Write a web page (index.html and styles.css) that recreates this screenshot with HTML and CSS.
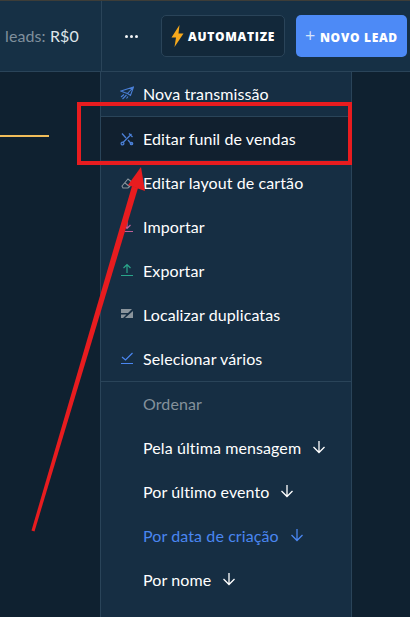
FILE: index.html
```html
<!DOCTYPE html>
<html lang="en">
<head>
  <meta charset="UTF-8">
  <title>Leads</title>
  <link rel="stylesheet" href="styles.css">
</head>
<body>
  <header class="top-bar">
    <div class="summary">leads: <span class="summary-value">R$0</span></div>
    <div class="actions">
      <button type="button" class="more-btn"><span></span><span></span><span></span></button>
      <button type="button" class="auto-btn">
        <svg width="13" height="22" viewBox="0 0 13 22"><path d="M8.5 0 L0.5 12.5 L5 12.5 L3.5 22 L12.5 8.5 L7.5 8.5 Z" fill="#f5a81c"/></svg>
        AUTOMATIZE
      </button>
      <button type="button" class="new-btn"><span class="plus">+</span> NOVO LEAD</button>
    </div>
  </header>

  <main class="board">
    <div class="stage-line"></div>

    <!-- Dropdown menu -->
    <nav class="menu">
      <a class="menu-item first-item">
        <svg class="menu-icon" viewBox="0 0 14 14" fill="none" stroke="#4a7fd6" stroke-width="1.1"><path d="M1 5 L13.5 1 L10.5 9.5 L7.5 7.5 L4.5 6.5 Z M13.5 1 L7.5 7.5 M4 8.5 L1 11 M6.5 9 L2.5 13 M8 10.5 L6.5 12.5"/></svg>
        <span>Nova transmissão</span>
      </a>
      <a class="menu-item is-hover">
        <svg class="menu-icon" viewBox="0 0 14 14" fill="none" stroke="#4a7fd6" stroke-width="1.3"><path d="M2 1.5 L6 6 M8 8 L11.5 12 M11.5 2 L2.5 11 M9 1.5 L12.5 5"/><circle cx="2.5" cy="11.5" r="1.4"/><circle cx="11.5" cy="11.5" r="1.2"/></svg>
        <span>Editar funil de vendas</span>
      </a>
      <a class="menu-item">
        <svg class="menu-icon" viewBox="0 0 14 14" fill="none" stroke="#8a949c" stroke-width="1.1"><path d="M2 11 L8 4 L13 8 L8 13 H3 Z M5 8 L10 12"/></svg>
        <span>Editar layout de cartão</span>
      </a>
      <a class="menu-item">
        <svg class="menu-icon" viewBox="0 0 14 14" fill="none" stroke="#c0609a" stroke-width="1.2"><path d="M7 1 L7 9 M3.5 6 L7 9.5 L10.5 6 M1 12.5 L13 12.5"/></svg>
        <span>Importar</span>
      </a>
      <a class="menu-item">
        <svg class="menu-icon" viewBox="0 0 14 14" fill="none" stroke="#2aa58a" stroke-width="1.2"><path d="M7 10 L7 2 M3.5 5 L7 1.5 L10.5 5 M1 12.5 L13 12.5"/></svg>
        <span>Exportar</span>
      </a>
      <a class="menu-item">
        <svg class="menu-icon" viewBox="0 0 14 14"><path d="M1 2 H12 L8 6 H1 Z M1 7.5 H6.5 L3 11 H1 Z M13 4 V11 H5 Z" fill="#8a949c"/></svg>
        <span>Localizar duplicatas</span>
      </a>
      <a class="menu-item">
        <svg class="menu-icon" viewBox="0 0 14 14" fill="none" stroke="#4a86f0" stroke-width="1.2"><path d="M2 6 L5.5 9 L12.5 2 M1 12.5 L13 12.5"/></svg>
        <span>Selecionar vários</span>
      </a>
      <div class="menu-sep"></div>
      <div class="menu-item menu-title">Ordenar</div>
      <a class="menu-item">Pela última mensagem <svg class="sort-arrow" viewBox="0 0 14 14"><path d="M7 1 V12.5 M1.5 7 L7 12.5 L12.5 7"/></svg></a>
      <a class="menu-item">Por último evento <svg class="sort-arrow" viewBox="0 0 14 14"><path d="M7 1 V12.5 M1.5 7 L7 12.5 L12.5 7"/></svg></a>
      <a class="menu-item is-active">Por data de criação <svg class="sort-arrow" viewBox="0 0 14 14"><path d="M7 1 V12.5 M1.5 7 L7 12.5 L12.5 7"/></svg></a>
      <a class="menu-item">Por nome <svg class="sort-arrow" viewBox="0 0 14 14"><path d="M7 1 V12.5 M1.5 7 L7 12.5 L12.5 7"/></svg></a>
    </nav>
  </main>

  <!-- Annotation drawn over the screenshot -->
  <div class="callout-box"></div>
  <svg class="callout-arrow" width="410" height="617" viewBox="0 0 410 617">
    <path d="M31.5 530.5 L34.5 531.5 L138 188 L132 186 Z" fill="#e81c1f"/>
    <path d="M141 167 L145 191 L128 185 Z" fill="#e81c1f"/>
  </svg>
</body>
</html>
```

FILE: styles.css
```css
html, body {
  height: 100%;
}
body {
  margin: 0;
  overflow: hidden;
  background: #0f2130;
  color: #fff;
  font-family: Lato, Arial, sans-serif;
  font-size: 16px;
  letter-spacing: 0.1px;
  display: flex;
  flex-direction: column;
}
.top-bar {
  height: 72px;
  flex: none;
  box-sizing: border-box;
  background: #163045;
  border-top: 1px solid #3d3d38;
  border-bottom: 1px solid #2a4459;
  display: flex;
  justify-content: space-between;
}
.summary {
  width: 101px;
  box-sizing: border-box;
  padding: 24px 0 0 5px;
  line-height: 22px;
  white-space: nowrap;
  color: #7f8f9c;
}
.summary-value {
  color: #dfe6ea;
}
.actions {
  flex: 1;
  display: flex;
  align-items: flex-start;
  padding-top: 14px;
  border-left: 1px solid #2a4459;
}
button {
  font-family: "Open Sans", Arial, sans-serif;
  font-weight: 800;
  font-size: 12px;
  letter-spacing: 0.7px;
  color: #fff;
  height: 42px;
  border-radius: 5px;
  cursor: pointer;
  white-space: nowrap;
}
.more-btn {
  width: 59px;
  padding: 0;
  background: none;
  border: none;
  display: flex;
  align-items: center;
  justify-content: center;
  gap: 2px;
}
.more-btn span {
  width: 3px;
  height: 3px;
  border-radius: 50%;
  background: #f2f4f6;
}
.auto-btn {
  width: 124px;
  padding: 0;
  margin-right: 11px;
  background: #12283a;
  border: 1px solid #2a4459;
  display: flex;
  align-items: center;
  justify-content: center;
  gap: 4px;
}
.new-btn {
  width: 111px;
  padding: 0;
  background: #4d8af6;
  border: none;
}
.plus {
  font-weight: 400;
  font-size: 18px;
  line-height: 18px;
  color: #d5e3fb;
}
.board {
  flex: 1;
  position: relative;
}
.stage-line {
  position: absolute;
  top: 63px;
  left: 0;
  width: 49px;
  height: 2px;
  background: #f0bd5a;
}
.menu {
  position: absolute;
  top: -1px;
  left: 100px;
  width: 252px;
  height: 560px;
  box-sizing: border-box;
  background: #162e43;
  border: 1px solid #2a4459;
}
.menu-item {
  display: flex;
  align-items: center;
  height: 44px;
  box-sizing: border-box;
  padding-left: 42px;
  white-space: nowrap;
  color: #fff;
}
.first-item {
  padding-bottom: 2px;
}
.menu-icon {
  flex: none;
  width: 14px;
  height: 14px;
  margin: 0 9px 0 -23px;
}
.is-hover {
  background: #11202f;
  border-top: 1px solid #2a4459;
}
.menu-sep {
  height: 1px;
  background: #2a4459;
  margin: 1px 0 -1px;
}
.menu-title {
  color: #84919b;
}
.is-active {
  color: #4a86f0;
}
.sort-arrow {
  width: 14px;
  height: 14px;
  margin-left: 11px;
  fill: none;
  stroke: currentColor;
  stroke-width: 1.3;
}
.callout-box {
  position: absolute;
  left: 77px;
  top: 102px;
  width: 275px;
  height: 63px;
  box-sizing: border-box;
  border: 4px solid #e81c1f;
}
.callout-arrow {
  position: absolute;
  left: 0;
  top: 0;
}
```
